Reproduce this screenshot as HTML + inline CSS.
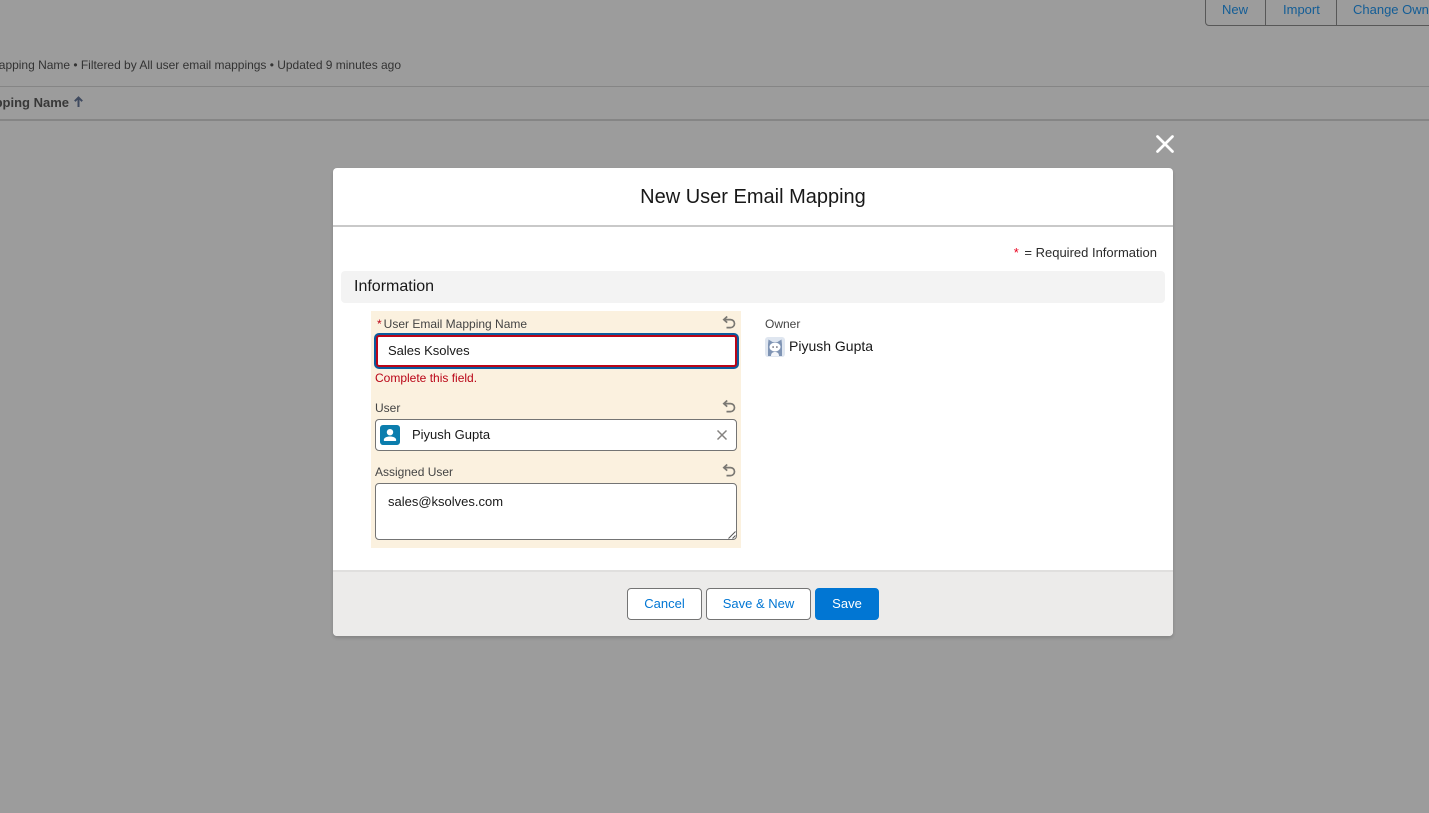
<!DOCTYPE html>
<html lang="en">
<head>
<meta charset="utf-8">
<title>New User Email Mapping</title>
<style>
html,body{margin:0;padding:0;width:1429px;height:813px;overflow:hidden;background:#9c9c9c;font-family:"Liberation Sans",sans-serif;color:#181818}
.a{position:absolute;white-space:nowrap}
.bgline{position:absolute;left:0;width:1429px}
.group{position:absolute;left:1205px;top:-6px;height:30px;width:240px;border:1px solid #585858;border-radius:4px;box-sizing:content-box}
.group i{position:absolute;top:0;bottom:0;width:1px;background:#585858}
.link{color:#135d96;font-size:13px;line-height:18px}
.modal{position:absolute;left:333px;top:168px;width:840px;height:468px;background:#fff;border-radius:4px;box-shadow:0 2px 3px rgba(0,0,0,.16)}
.label{font-size:12px;line-height:16px;color:#444}
.val{font-size:13px;line-height:18px;color:#181818}
.box{position:absolute;box-sizing:border-box;background:#fff;border:1px solid #747474;border-radius:4px}
.btn{position:absolute;top:420px;height:32px;box-sizing:border-box;border:1px solid #747474;border-radius:4px;background:#fff;color:#0176d3;font-size:13px;line-height:30px;text-align:center}
svg{position:absolute;display:block}
</style>
</head>
<body>
<div class="group"><i style="left:59px"></i><i style="left:130px"></i></div>
<div class="a link" style="left:1222px;top:1px">New</div>
<div class="a link" style="left:1283px;top:1px">Import</div>
<div class="a link" style="left:1353px;top:1px">Change Owner</div>

<div class="a" style="right:1028px;top:57px;font-size:12px;line-height:16px;color:#333;letter-spacing:-0.015px">Mapping Name • Filtered by All user email mappings • Updated 9 minutes ago</div>
<div class="bgline" style="top:86px;height:1px;background:#858585"></div>
<div class="a" style="right:1360px;top:94px;font-size:13px;line-height:18px;font-weight:700;color:#383838">Mapping Name</div>
<svg style="left:73px;top:96px" width="11" height="12" viewBox="0 0 11 12"><path d="M5.500 11V1.500M1.800 5.200l3.700-3.700 3.700 3.700" fill="none" stroke="#3f4a5f" stroke-width="2"/></svg>
<div class="bgline" style="top:119px;height:2px;background:#858585"></div>

<svg style="left:1155px;top:134px" width="20" height="20" viewBox="0 0 20 20"><path d="M2.500 2.500l15 15M17.500 2.500l-15 15" stroke="#fff" stroke-width="2.700" stroke-linecap="round"/></svg>

<div class="modal">
  <div class="a" style="left:0;width:840px;top:17px;text-align:center;font-size:20px;line-height:25px;color:#181818">New User Email Mapping</div>
  <div style="position:absolute;left:0;top:57px;width:840px;height:2px;background:#c9c9c9"></div>

  <div class="a" style="right:16px;top:76px;font-size:13px;line-height:18px;color:#2b2b2b"><span style="color:#ea001e;margin-right:2px">*</span> = Required Information</div>

  <div style="position:absolute;left:8px;top:103px;width:824px;height:32px;background:#f3f3f3;border-radius:4px"></div>
  <div class="a" style="left:21px;top:108px;font-size:16px;line-height:21px;color:#181818">Information</div>

  <div style="position:absolute;left:38px;top:143px;width:370px;height:237px;background:#fbf1df"></div>

  <div class="a label" style="left:44px;top:148px"><span style="color:#ba0517;margin-right:2px">*</span>User Email Mapping Name</div>
  <svg style="left:389px;top:147px" width="15" height="15" viewBox="0 0 15 15"><path d="M5.200 1.500L1.800 4.600l3.400 3M2.200 4.600h6.300a4 4 0 0 1 0 8H4.500" fill="none" stroke="#7a7873" stroke-width="1.700"/></svg>
  <div class="box" style="left:43px;top:167px;width:361px;height:32px;border:2px solid #ba0517;border-radius:3px;box-shadow:0 0 0 2px #0b5a9c"></div>
  <div class="a val" style="left:55px;top:174px">Sales Ksolves</div>
  <div class="a" style="left:42px;top:202px;font-size:12px;line-height:16px;color:#ba0517">Complete this field.</div>

  <div class="a label" style="left:42px;top:232px">User</div>
  <svg style="left:389px;top:231px" width="15" height="15" viewBox="0 0 15 15"><path d="M5.200 1.500L1.800 4.600l3.400 3M2.200 4.600h6.300a4 4 0 0 1 0 8H4.500" fill="none" stroke="#7a7873" stroke-width="1.700"/></svg>
  <div class="box" style="left:42px;top:251px;width:362px;height:32px"></div>
  <svg style="left:47px;top:257px" width="20" height="20" viewBox="0 0 20 20"><rect width="20" height="20" rx="3" fill="#0b7dad"/><circle cx="10" cy="7.200" r="3.200" fill="#fff"/><path d="M3.800 15.200c0-2.600 3-3.700 6.200-3.700s6.200 1.100 6.200 3.700c0 .5-.4.8-.9.8H4.700c-.5 0-.9-.3-.9-.8z" fill="#fff"/></svg>
  <div class="a val" style="left:79px;top:258px">Piyush Gupta</div>
  <svg style="left:383px;top:261px" width="12" height="12" viewBox="0 0 12 12"><path d="M1.500 1.500l9 9M10.500 1.500l-9 9" stroke="#858380" stroke-width="1.500"/></svg>

  <div class="a label" style="left:42px;top:296px">Assigned User</div>
  <svg style="left:389px;top:295px" width="15" height="15" viewBox="0 0 15 15"><path d="M5.200 1.500L1.800 4.600l3.400 3M2.200 4.600h6.300a4 4 0 0 1 0 8H4.500" fill="none" stroke="#7a7873" stroke-width="1.700"/></svg>
  <div class="box" style="left:42px;top:315px;width:362px;height:57px"></div>
  <div class="a val" style="left:55px;top:325px">sales@ksolves.com</div>
  <svg style="left:395px;top:363px" width="8" height="8" viewBox="0 0 8 8"><path d="M0.500 7.500L7.500 0.500M4.500 7.500L7.500 4.500" stroke="#555" stroke-width="1"/></svg>

  <div class="a label" style="left:432px;top:148px">Owner</div>
  <svg style="left:432px;top:169px" width="20" height="20" viewBox="0 0 20 20"><rect width="20" height="20" rx="3" fill="#dfe6f0"/><path d="M3 19V7.500L3.500 2.500l4 2.500h5l4-2.500.5 5V19z" fill="#7f94b4"/><ellipse cx="10" cy="10" rx="5.500" ry="4.500" fill="#fff"/><path d="M6 19c0-3 1.800-4 4-4s4 1 4 4z" fill="#f4f6fa"/><circle cx="8.100" cy="10" r=".8" fill="#445"/><circle cx="11.900" cy="10" r=".8" fill="#445"/></svg>
  <div class="a" style="left:456px;top:169px;font-size:14px;line-height:18px;color:#181818">Piyush Gupta</div>

  <div style="position:absolute;left:0;top:402px;width:840px;height:66px;box-sizing:border-box;background:#ecebea;border-top:2px solid #e0dfde;border-radius:0 0 4px 4px"></div>
  <div class="btn" style="left:294px;width:75px">Cancel</div>
  <div class="btn" style="left:373px;width:105px">Save &amp; New</div>
  <div class="btn" style="left:482px;width:64px;background:#0176d3;border-color:#0176d3;color:#fff">Save</div>
</div>
</body>
</html>
